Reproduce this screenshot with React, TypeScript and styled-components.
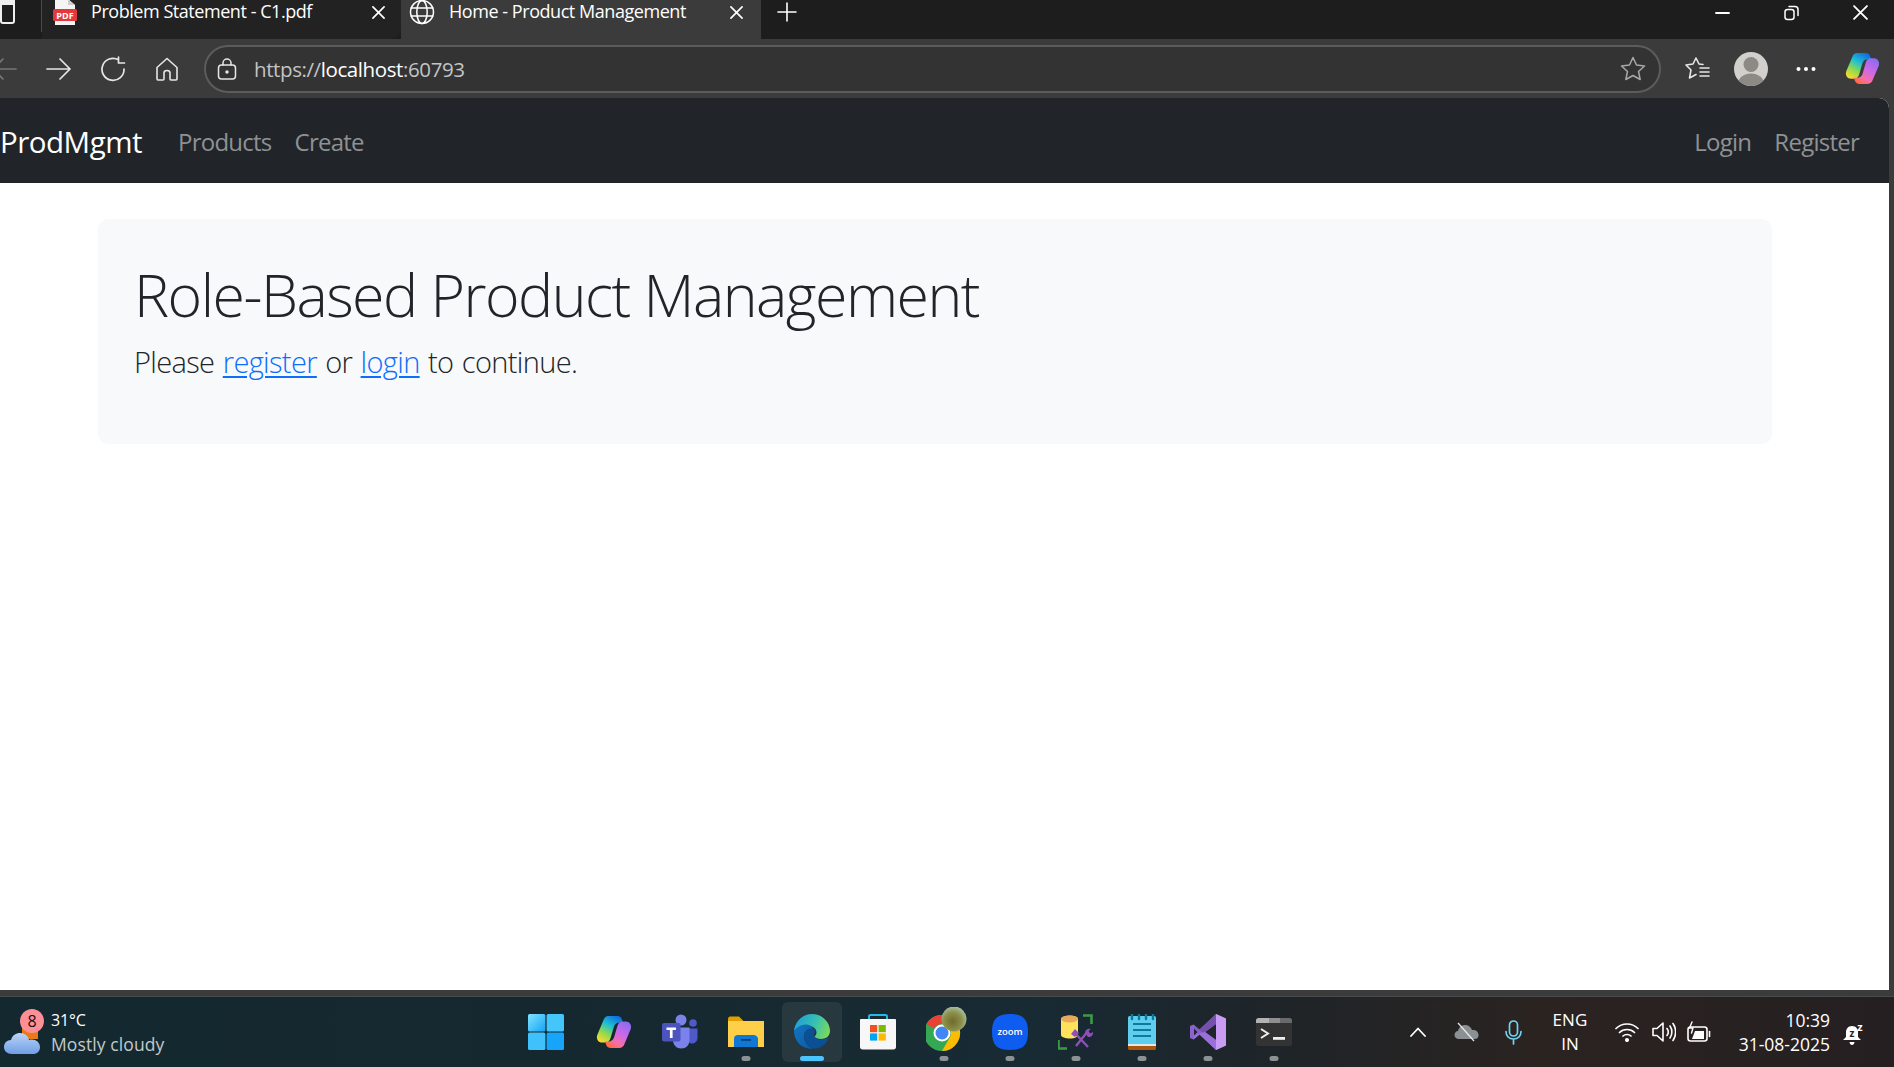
import React from 'react';
import styled, { createGlobalStyle } from 'styled-components';

const uiFont = '"Open Sans", "Noto Sans", "Liberation Sans", sans-serif';

const GlobalStyle = createGlobalStyle`
  html, body {
    margin: 0;
    padding: 0;
    background: #3b3b3b;
  }
  #root {
    width: 1894px;
    height: 1067px;
  }
`;

const Screen = styled.div`
  width: 1894px;
  height: 1067px;
  overflow: hidden;
  display: flex;
  flex-direction: column;
  font-family: ${uiFont};
`;

// browser chrome: tabs
const TabStrip = styled.div`
  height: 39px;
  flex: none;
  display: flex;
  align-items: stretch;
  background: #1d1d1d;
  color: #fff;
`;

const WorkspaceBox = styled.div`
  width: 41px;
  flex: none;
  border-right: 1px solid #4a4a4a;
  margin-bottom: 7px;
`;

const WorkspaceGlyph = styled.div`
  width: 15px;
  height: 24px;
  margin-top: 0;
  border: 2px solid #eee;
  border-top-width: 5px;
  border-radius: 0 0 3px 3px;
  box-sizing: border-box;
`;

const Tab = styled.div<{ $active?: boolean; $width: number; $inset: number; $end: number }>`
  width: ${(p) => p.$width}px;
  flex: none;
  display: flex;
  align-items: center;
  padding: 0 ${(p) => p.$end}px 15px ${(p) => p.$inset}px;
  box-sizing: border-box;
  background: ${(p) => (p.$active ? '#3b3b3b' : '#222222')};
  border-radius: ${(p) => (p.$active ? '0' : '0 0 10px 0')};
`;

const TabTitle = styled.span<{ $gap: number }>`
  margin-left: ${(p) => p.$gap}px;
  margin-top: -2px;
  flex: 1;
  font-size: 18px;
  letter-spacing: -0.45px;
  line-height: 24px;
  white-space: nowrap;
`;

const NewTab = styled.div`
  width: 52px;
  flex: none;
  display: flex;
  justify-content: center;
  padding-bottom: 15px;
  align-items: center;
  background: #1d1d1d;
  border-radius: 0 0 0 10px;
`;

const WindowControls = styled.div`
  margin-left: auto;
  display: flex;
  align-items: flex-start;
  padding: 5px 26px 0 0;
  gap: 54px;
`;

// browser chrome: address row
const Toolbar = styled.div`
  height: 59px;
  flex: none;
  display: flex;
  align-items: center;
  background: #3b3b3b;
  color: #e6e6e6;
`;

const NavButton = styled.div<{ $left: number }>`
  margin-left: ${(p) => p.$left}px;
  display: flex;
  flex: none;
`;

const AddressBar = styled.div`
  margin-left: 25px;
  width: 1457px;
  height: 48px;
  flex: none;
  box-sizing: border-box;
  border: 2px solid #5c5c5c;
  border-radius: 24px;
  background: #333333;
  display: flex;
  align-items: center;
  padding: 0 13px 0 11px;
`;

const Url = styled.span`
  margin-left: 17px;
  font-size: 20.5px;
  letter-spacing: -0.4px;
  color: #c4c4c4;
  flex: 1;
  b {
    font-weight: 400;
    color: #fff;
  }
`;

const Avatar = styled.div`
  margin-left: 23px;
  width: 34px;
  height: 34px;
  border-radius: 50%;
  overflow: hidden;
  flex: none;
  display: flex;
`;

// web page
const PageFrame = styled.div`
  flex: 1;
  min-height: 0;
  display: flex;
  background: #3b3b3b;
  padding: 0 5px 6px 0;
  border-bottom: 1px solid #484c4e;
  background-clip: padding-box;
`;

const Page = styled.div`
  flex: 1;
  min-width: 0;
  background: #fff;
  border-top-right-radius: 10px;
  overflow: hidden;
  display: flex;
  flex-direction: column;
`;

const Navbar = styled.nav`
  height: 85px;
  flex: none;
  display: flex;
  align-items: center;
  background: #212529;
  padding: 2px 30px 0 0;
  box-sizing: border-box;
`;

const Brand = styled.a`
  font-size: 29.5px;
  letter-spacing: -0.5px;
  color: #fff;
  margin-right: 36px;
`;

const NavLink = styled.a<{ $push?: boolean }>`
  font-size: 24px;
  letter-spacing: -0.75px;
  color: #8f9194;
  margin-right: 23px;
  margin-left: ${(p) => (p.$push ? 'auto' : '0')};
  &:last-child {
    margin-right: 0;
  }
`;

const Main = styled.main`
  padding: 36px 117px 0 98px;
`;

const Jumbotron = styled.section`
  background: #f8f9fa;
  border-radius: 10px;
  height: 225px;
  box-sizing: border-box;
  padding: 36px;
  color: #212529;
`;

const Heading = styled.h1`
  margin: 3px 0 0;
  font-size: 59px;
  font-weight: 300;
  letter-spacing: -1.5px;
  line-height: 72px;
`;

const Lead = styled.p`
  margin: 12px 0 0;
  font-size: 29px;
  font-weight: 300;
  letter-spacing: -0.65px;
  word-spacing: 1.5px;
  line-height: 40px;
  a {
    color: #0d6efd;
    text-decoration: underline;
    text-decoration-thickness: 2px;
    text-underline-offset: 3px;
  }
`;

// windows taskbar
const Taskbar = styled.div`
  height: 70px;
  flex: none;
  display: flex;
  align-items: center;
  color: #fff;
  background: linear-gradient(90deg, #142830 0%, #16282f 30%, #182a33 55%, #1f2428 68%, #2b2320 82%, #251f22 100%);
`;

const Weather = styled.div`
  width: 515px;
  flex: none;
  display: flex;
  align-items: center;
  height: 100%;
  box-sizing: border-box;
  padding-left: 4px;
`;

const WeatherIcon = styled.div`
  position: relative;
  width: 47px;
  height: 46px;
  flex: none;
  display: flex;
  align-items: flex-end;
`;

const Badge = styled.span`
  position: absolute;
  left: 16px;
  top: 0;
  width: 24px;
  height: 24px;
  border-radius: 50%;
  background: #ff8f96;
  color: #111;
  font-size: 16px;
  line-height: 24px;
  text-align: center;
`;

const WeatherText = styled.div`
  display: flex;
  flex-direction: column;
  font-size: 16px;
  line-height: 24px;
  letter-spacing: -0.1px;
`;

const WeatherNote = styled.span`
  color: #c3c9cb;
  font-size: 17.5px;
  letter-spacing: 0.1px;
`;

const TaskIcons = styled.div`
  display: flex;
  height: 100%;
`;

const TaskSlot = styled.div<{ $active?: boolean; $open?: boolean }>`
  position: relative;
  width: 66px;
  height: 100%;
  box-sizing: border-box;
  display: flex;
  align-items: center;
  justify-content: center;
  &::before {
    content: '';
    display: ${(p) => (p.$active ? 'block' : 'none')};
    position: absolute;
    left: 3px;
    right: 3px;
    top: 5px;
    bottom: 5px;
    border-radius: 6px;
    background: rgba(255, 255, 255, 0.07);
  }
  &::after {
    content: '';
    display: ${(p) => (p.$active || p.$open ? 'block' : 'none')};
    position: absolute;
    bottom: 6px;
    left: 50%;
    transform: translateX(-50%);
    width: ${(p) => (p.$active ? 24 : 9)}px;
    height: 5px;
    border-radius: 3px;
    background: ${(p) => (p.$active ? '#4cc2ff' : '#8c9193')};
  }
  svg {
    position: relative;
    z-index: 1;
  }
`;

const StartSlot = styled(TaskSlot)`
  padding-right: 4px;
`;

const Tray = styled.div`
  flex: 1;
  display: flex;
  align-items: center;
  height: 100%;
`;

const TrayItem = styled.div<{ $left: number }>`
  margin-left: ${(p) => p.$left}px;
  display: flex;
  flex: none;
`;

const Lang = styled.div`
  margin-left: 26px;
  width: 44px;
  text-align: center;
  font-size: 17px;
  line-height: 24px;
  letter-spacing: 0.1px;
`;

const Clock = styled.div`
  margin-left: 0;
  width: 119px;
  text-align: right;
  font-size: 17.5px;
  line-height: 24px;
`;

const IconStroke = { fill: 'none', stroke: 'currentColor', strokeLinecap: 'round', strokeLinejoin: 'round' } as const;

const CopilotIcon = ({ size, tag }: { size: number; tag: string }) => (
  <svg width={size} height={size} viewBox="0 0 34 34">
    <defs>
      <linearGradient id={`${tag}L`} x1="0.75" y1="0" x2="0.2" y2="1">
        <stop offset="0" stopColor="#0f6fe0" />
        <stop offset="0.38" stopColor="#1fc0d0" />
        <stop offset="0.68" stopColor="#8fd94f" />
        <stop offset="1" stopColor="#fbd92f" />
      </linearGradient>
      <linearGradient id={`${tag}R`} x1="0.8" y1="0" x2="0.2" y2="1">
        <stop offset="0" stopColor="#8a6cf0" />
        <stop offset="0.45" stopColor="#cf68e6" />
        <stop offset="0.75" stopColor="#f56fa8" />
        <stop offset="1" stopColor="#ff6a3a" />
      </linearGradient>
    </defs>
    <path d="M12 2h8c2.200 0 3.700 1 4.400 3l1 3h-3c-3 0-4.700 1.500-5.500 4l-3.200 11c-.8 2.700-2.600 4-5 4H6c-3.700 0-6-3.200-4.900-7L7 6c.8-2.500 2.500-4 5-4z" fill={`url(#${tag}L)`} />
    <path d="M22 32h-8c-2.200 0-3.700-1-4.400-3l-1-3h3c3 0 4.700-1.500 5.500-4l3.200-11c.8-2.700 2.600-4 5-4h2.700c3.700 0 6 3.200 4.900 7L27 28c-.8 2.500-2.500 4-5 4z" fill={`url(#${tag}R)`} />
  </svg>
);

const PdfIcon = () => (
  <svg width="24" height="26" viewBox="0 0 24 26">
    <path d="M2 0h13l7 6v20H2z" fill="#f5f5f5" />
    <path d="M15 0v6h7z" fill="#cfcfcf" />
    <rect x="0" y="10" width="24" height="12" rx="1.500" fill="#e5383b" />
    <text x="12" y="19.500" textAnchor="middle" fontSize="9" fontWeight="700" fill="#fff" fontFamily={uiFont}>PDF</text>
  </svg>
);

const GlobeIcon = () => (
  <svg width="26" height="26" viewBox="0 0 26 26" {...IconStroke} strokeWidth="1.500">
    <circle cx="13" cy="13" r="11.500" />
    <ellipse cx="13" cy="13" rx="5.200" ry="11.500" />
    <path d="M2.200 9h21.600M2.200 17h21.600" />
  </svg>
);

const CloseGlyph = ({ size = 13, weight = 1.8 }: { size?: number; weight?: number }) => (
  <svg width={size} height={size} viewBox="0 0 14 14" {...IconStroke} strokeWidth={weight}>
    <path d="M1 1l12 12M13 1L1 13" />
  </svg>
);

const StartIcon = () => (
  <svg width="36" height="36" viewBox="0 0 36 36">
    <defs>
      <linearGradient id="startA" x1="0" y1="0" x2="1" y2="1">
        <stop offset="0" stopColor="#7fe3ff" />
        <stop offset="1" stopColor="#16a4f5" />
      </linearGradient>
    </defs>
    <rect x="0" y="0" width="17.400" height="17.400" rx="1.500" fill="url(#startA)" />
    <rect x="18.600" y="0" width="17.400" height="17.400" rx="1.500" fill="#45c6fb" />
    <rect x="0" y="18.600" width="17.400" height="17.400" rx="1.500" fill="#3fc2fb" />
    <rect x="18.600" y="18.600" width="17.400" height="17.400" rx="1.500" fill="#16a5fb" />
  </svg>
);

const TeamsIcon = () => (
  <svg width="36" height="36" viewBox="0 0 36 36">
    <circle cx="31" cy="9" r="3.800" fill="#5059c9" />
    <path d="M25 14.500h10.500v9c0 3.500-2.300 6-5.300 6s-5.200-2.500-5.200-6z" fill="#5059c9" />
    <circle cx="19" cy="6" r="5.500" fill="#7b83eb" />
    <path d="M11 13.500h16.500v12.500c0 5-3.600 8.500-8.200 8.500S11 31 11 26z" fill="#7b83eb" />
    <rect x="0" y="9" width="18.500" height="18.500" rx="2" fill="#4b53bc" />
    <path d="M4.500 13.500h9.500v2.400h-3.400v8h-2.700v-8H4.500z" fill="#fff" />
  </svg>
);

const FolderIcon = () => (
  <svg width="36" height="36" viewBox="0 0 36 36">
    <path d="M0 5c0-1.500 1-2.500 2.500-2.500h8.500l4.500 4.500H36v5H0z" fill="#dfa000" />
    <path d="M0 7h36v26H0z" fill="#ffcf4a" />
    <path d="M6 33v-8c0-2.500 1.500-4 4-4h15c2.500 0 5 1.500 5 4v8z" fill="#0f78d4" />
    <rect x="13" y="25" width="10" height="1.800" fill="#0a3f75" />
  </svg>
);

const EdgeIcon = () => (
  <svg width="36" height="36" viewBox="0 0 36 36">
    <defs>
      <linearGradient id="edgeTop" x1="0" y1="0.3" x2="1" y2="0.6">
        <stop offset="0" stopColor="#1f9ed8" />
        <stop offset="0.55" stopColor="#35c1b2" />
        <stop offset="1" stopColor="#7ad95c" />
      </linearGradient>
      <linearGradient id="edgeBody" x1="0" y1="0" x2="1" y2="1">
        <stop offset="0" stopColor="#1276c4" />
        <stop offset="1" stopColor="#0c59a4" />
      </linearGradient>
    </defs>
    <path d="M0 17C1 7 9 0 18 0c10 0 18 8 18 17 0 5-4 8-9 8-3 0-6-1-6.500-2.500 1-1 2-2 2-4 0-4-4-7-9-7-6 0-11 3-13.500 5.500z" fill="url(#edgeTop)" />
    <path d="M0 17c2-3 6-6 11.500-6.500C16 10.500 19 13 19 15c-4-1-9 1.500-9 7.500 0 5 3.500 10 9 12-10.500 1.500-19-7-19-17.500z" fill="url(#edgeBody)" />
    <path d="M19 15c2 .5 2.500 2 1.500 3.500-1 1.500-1 3.500.5 5 2 2 6 2.500 9.500 1.500 2-.6 3.500-1.500 4.500-2.500-1 4.500-3.500 8-8 10.500-3 1.500-5.500 1.700-8 1.300-5.500-2-9-7-9-12 0-6 5-8.500 9-7.300z" fill="#0b4f94" />
  </svg>
);

const StoreIcon = () => (
  <svg width="36" height="36" viewBox="0 0 36 36">
    <path d="M9 7V2.500c0-1 .5-1.500 1.500-1.500h15c1 0 1.500.5 1.500 1.500V7" fill="none" stroke="#29b6e8" strokeWidth="2" />
    <path d="M1 5h34c.5 0 1 .5 1 1v27c0 1.500-1 2.500-2.500 2.500h-31C1 35.500 0 34.500 0 33V6c0-.5.500-1 1-1z" fill="#f7f7f7" />
    <rect x="10" y="11" width="7.200" height="7.200" fill="#f25022" />
    <rect x="18.600" y="11" width="7.200" height="7.200" fill="#7fba00" />
    <rect x="10" y="19.400" width="7.200" height="7.200" fill="#00a4ef" />
    <rect x="18.600" y="19.400" width="7.200" height="7.200" fill="#ffb900" />
  </svg>
);

const ChromeIcon = () => (
  <svg width="44" height="44" viewBox="0 0 44 44" style={{ marginTop: -6, marginLeft: 8 }}>
    <defs>
      <radialGradient id="chromeAvatar" cx="0.45" cy="0.6" r="0.6">
        <stop offset="0" stopColor="#6f6a2e" />
        <stop offset="0.6" stopColor="#8c9048" />
        <stop offset="1" stopColor="#a9bfa2" />
      </radialGradient>
    </defs>
    <circle cx="16" cy="26" r="18" fill="#34a853" />
    <path d="M16 8a18 18 0 0 1 15.600 9H16a9 9 0 0 0-7.800 4.500L.4 17A18 18 0 0 1 16 8z" fill="#ea4335" />
    <path d="M31.600 17A18 18 0 0 1 16 44l7.800-13.500A9 9 0 0 0 25 26a9 9 0 0 0-1.200-4.500z" fill="#fbbc05" />
    <circle cx="16" cy="26" r="8.500" fill="#fff" />
    <circle cx="16" cy="26" r="6.500" fill="#4285f4" />
    <circle cx="28" cy="12" r="12.500" fill="url(#chromeAvatar)" />
  </svg>
);

const ZoomIcon = () => (
  <svg width="36" height="36" viewBox="0 0 36 36">
    <path d="M18 0c13 0 18 5 18 18s-5 18-18 18S0 31 0 18 5 0 18 0z" fill="#0e5cf0" />
    <text x="18" y="20.500" textAnchor="middle" fontSize="9.500" fontWeight="600" fill="#fff" fontFamily={uiFont}>zoom</text>
  </svg>
);

const DbToolIcon = () => (
  <svg width="36" height="36" viewBox="0 0 36 36">
    <path d="M3 5c0-2 4-3.500 9-3.500S20 3 20 5v16c0 2-3.500 3.500-8 3.500S3 23 3 21z" fill="#ffe15c" />
    <ellipse cx="11.500" cy="5" rx="8.500" ry="3.500" fill="#eaa95a" />
    <path d="M25 1.500h8.500v8.500M9 34.500H.5V26" fill="none" stroke="#3c9a45" strokeWidth="2.600" />
    <path d="M16 18l14 15M30 17L18 32" stroke="#8d4fb8" strokeWidth="2.400" fill="none" />
    <path d="M13 20l4-5 4 4-4 4zM27 19c0-3 3-5 5.500-4l-2 2.500 2 2 2.500-1.500c.5 3-2 5.500-5 5z" fill="#8d4fb8" />
  </svg>
);

const NotepadIcon = () => (
  <svg width="30" height="36" viewBox="0 0 30 36">
    <rect x="1" y="2" width="28" height="30" rx="1.500" fill="#5fcdee" />
    <path d="M1 30h28v2H1z" fill="#dfe8ea" />
    <path d="M1 32h28v2.500c0 .8-.5 1.500-1.500 1.500h-25C1.500 36 1 35.300 1 34.500z" fill="#a9560f" />
    <path d="M5 0v5M12 0v5M19 0v5M26 0v5" stroke="#0c7b9a" strokeWidth="2.400" strokeLinecap="round" />
    <path d="M6 10h18M6 16h18M6 22h18" stroke="#0c7b9a" strokeWidth="2" />
  </svg>
);

const VsIcon = () => (
  <svg width="36" height="36" viewBox="0 0 36 36">
    <path fillRule="evenodd" d="M26 0L9.500 15.500 3.500 10.500 0 12v12l3.500 1.500 6-5L26 36l10-4.500v-27zM26 10v16l-11-8zM4 14.500v7L7.500 18z" fill="#8c62cc" />
    <path d="M26 0l10 4.500v27L26 36V26l0-16z" fill="#c79cf2" />
    <path d="M26 0L9.500 15.500 3.500 10.500 7 15l7 4 12-9z" fill="#7650ad" />
    <path d="M3.500 25.500l6-5L26 36V26L15 18l-11 3.500z" fill="#9a6fd8" />
  </svg>
);

const TerminalIcon = () => (
  <svg width="36" height="28" viewBox="0 0 36 28">
    <rect x="0" y="0" width="36" height="28" rx="2.500" fill="#333" />
    <path d="M2.500 0H13v5H0V2.500C0 1 1 0 2.500 0z" fill="#b3b3b3" />
    <rect x="13" y="0" width="11" height="5" fill="#8f8f8f" />
    <path d="M24 0h9.500C35 0 36 1 36 2.500V5H24z" fill="#6a6a6a" />
    <path d="M5 11l7 4.500L5 20" fill="none" stroke="#eee" strokeWidth="2" />
    <rect x="17" y="19" width="12" height="2.800" fill="#eee" />
  </svg>
);

const App = () => (
  <Screen>
    <GlobalStyle />
    <TabStrip>
      <WorkspaceBox>
        <WorkspaceGlyph />
      </WorkspaceBox>
      <Tab $width={359} $inset={11} $end={16}>
        <PdfIcon />
        <TabTitle $gap={14}>Problem Statement - C1.pdf</TabTitle>
        <CloseGlyph />
      </Tab>
      <Tab $active $width={360} $inset={8} $end={18}>
        <GlobeIcon />
        <TabTitle $gap={14}>Home - Product Management</TabTitle>
        <CloseGlyph />
      </Tab>
      <NewTab>
        <svg width="20" height="20" viewBox="0 0 20 20" {...IconStroke} strokeWidth="1.600">
          <path d="M10 1v18M1 10h18" />
        </svg>
      </NewTab>
      <WindowControls>
        <svg width="15" height="16" viewBox="0 0 15 16" {...IconStroke} strokeWidth="1.800">
          <path d="M1 8h13" />
        </svg>
        <svg width="15" height="16" viewBox="0 0 15 16" {...IconStroke} strokeWidth="1.500">
          <rect x="1" y="4.500" width="9" height="10" rx="2.500" />
          <path d="M5 1.500h6c1.700 0 3 1.300 3 3v6" />
        </svg>
        <CloseGlyph size={15} weight={1.700} />
      </WindowControls>
    </TabStrip>

    <Toolbar>
      <NavButton $left={-9}>
        <svg width="26" height="26" viewBox="0 0 26 26" {...IconStroke} strokeWidth="1.700" color="#777">
          <path d="M25 13H2M12 3L2 13l10 10" />
        </svg>
      </NavButton>
      <NavButton $left={29}>
        <svg width="26" height="26" viewBox="0 0 26 26" {...IconStroke} strokeWidth="1.700">
          <path d="M1 13h23M14 3l10 10-10 10" />
        </svg>
      </NavButton>
      <NavButton $left={28}>
        <svg width="26" height="26" viewBox="0 0 26 26" {...IconStroke} strokeWidth="1.700">
          <path d="M18.500 3.800A11 11 0 1 0 24 13M18.500 1v6h6" />
        </svg>
      </NavButton>
      <NavButton $left={29}>
        <svg width="24" height="24" viewBox="0 0 24 24" {...IconStroke} strokeWidth="1.600">
          <path d="M12 1.500L2 10.500V22c0 .5.300 1 1 1h5c.7 0 1-.5 1-1v-6c0-1.500 1-2.500 3-2.500s3 1 3 2.500v6c0 .5.300 1 1 1h5c.7 0 1-.5 1-1V10.500z" />
        </svg>
      </NavButton>
      <AddressBar>
        <svg width="20" height="22" viewBox="0 0 20 22" {...IconStroke} strokeWidth="1.500">
          <rect x="1.500" y="7" width="17" height="14" rx="3" />
          <path d="M6 7V5a4 4 0 0 1 8 0v2" />
          <circle cx="10" cy="14" r="1" fill="currentColor" />
        </svg>
        <Url>
          https://<b>localhost</b>:60793
        </Url>
        <svg width="26" height="25" viewBox="0 0 26 25" {...IconStroke} strokeWidth="1.500" color="#a8a8a8">
          <path d="M13 1.500l3.500 7.500 8 1-6 5.500 1.700 8L13 19.500 5.800 23.500l1.700-8-6-5.500 8-1z" />
        </svg>
      </AddressBar>
      <NavButton $left={24}>
        <svg width="26" height="26" viewBox="0 0 26 26" {...IconStroke} strokeWidth="1.600">
          <path d="M18 8.500L14 8l-3-6-3 6-7 1 5 5-1.500 8 6.500-3.500" />
          <path d="M15 12h9M15 16h9M15 20h9" />
        </svg>
      </NavButton>
      <Avatar>
        <svg width="34" height="34" viewBox="0 0 34 34">
          <rect width="34" height="34" fill="#d1d0cc" />
          <circle cx="17" cy="12.500" r="7.500" fill="#8d8a86" />
          <ellipse cx="17" cy="32" rx="13" ry="10.500" fill="#8d8a86" />
        </svg>
      </Avatar>
      <NavButton $left={28}>
        <svg width="20" height="6" viewBox="0 0 20 6" fill="#fff">
          <circle cx="2.500" cy="3" r="2" />
          <circle cx="10" cy="3" r="2" />
          <circle cx="17.500" cy="3" r="2" />
        </svg>
      </NavButton>
      <NavButton $left={29}>
        <CopilotIcon size={35} tag="bar" />
      </NavButton>
    </Toolbar>

    <PageFrame>
      <Page>
        <Navbar>
          <Brand>ProdMgmt</Brand>
          <NavLink>Products</NavLink>
          <NavLink>Create</NavLink>
          <NavLink $push>Login</NavLink>
          <NavLink>Register</NavLink>
        </Navbar>
        <Main>
          <Jumbotron>
            <Heading>Role-Based Product Management</Heading>
            <Lead>
              Please <a href="#register">register</a> or <a href="#login">login</a> to continue.
            </Lead>
          </Jumbotron>
        </Main>
      </Page>
    </PageFrame>

    <Taskbar>
      <Weather>
        <WeatherIcon>
          <svg width="38" height="30" viewBox="0 0 38 30">
            <defs>
              <linearGradient id="cloud" x1="0" y1="0" x2="0" y2="1">
                <stop offset="0" stopColor="#bcd3f7" />
                <stop offset="1" stopColor="#6f9fe6" />
              </linearGradient>
            </defs>
            <rect x="18" y="0" width="16" height="14" fill="#e87a17" />
            <path d="M8 29C3 29 0 26 0 22s3-7 7-7c1.500-5 5-7 9-7 5 0 8 3 9 7 1-.5 2-.5 3-.5 4 0 8 3 8 7.500S33 29 29 29z" fill="url(#cloud)" />
          </svg>
          <Badge>8</Badge>
        </WeatherIcon>
        <WeatherText>
          <span>31°C</span>
          <WeatherNote>Mostly cloudy</WeatherNote>
        </WeatherText>
      </Weather>
      <TaskIcons>
        <StartSlot><StartIcon /></StartSlot>
        <TaskSlot><CopilotIcon size={36} tag="task" /></TaskSlot>
        <TaskSlot><TeamsIcon /></TaskSlot>
        <TaskSlot $open><FolderIcon /></TaskSlot>
        <TaskSlot $active><EdgeIcon /></TaskSlot>
        <TaskSlot><StoreIcon /></TaskSlot>
        <TaskSlot $open><ChromeIcon /></TaskSlot>
        <TaskSlot $open><ZoomIcon /></TaskSlot>
        <TaskSlot $open><DbToolIcon /></TaskSlot>
        <TaskSlot $open><NotepadIcon /></TaskSlot>
        <TaskSlot $open><VsIcon /></TaskSlot>
        <TaskSlot $open><TerminalIcon /></TaskSlot>
      </TaskIcons>
      <Tray>
        <TrayItem $left={103}>
          <svg width="16" height="10" viewBox="0 0 16 10" {...IconStroke} strokeWidth="1.800">
            <path d="M1 9l7-7.500L15 9" />
          </svg>
        </TrayItem>
        <TrayItem $left={28}>
          <svg width="25" height="20" viewBox="0 0 25 20">
            <path d="M5 17c-3 0-4.500-2-4.500-4s1.500-4 3.500-4c1-4 4-6 7-6 3.500 0 6 2 7 5 3.500-.5 6.500 1.500 6.500 5s-2 4-4 4z" fill="#8b9092" />
            <path d="M4 1l16 18" stroke="#e8e8e8" strokeWidth="1.300" />
          </svg>
        </TrayItem>
        <TrayItem $left={26}>
          <svg width="17" height="25" viewBox="0 0 17 25" fill="none" stroke="#6fd3f2" strokeWidth="1.700" strokeLinecap="round">
            <rect x="4.500" y="1" width="8" height="15" rx="4" />
            <path d="M1 11.500c0 4.500 3 7.500 7.500 7.500s7.500-3 7.500-7.500M8.500 19v5" />
          </svg>
        </TrayItem>
        <Lang>
          ENG
          <br />
          IN
        </Lang>
        <TrayItem $left={23}>
          <svg width="24" height="20" viewBox="0 0 24 20" {...IconStroke} strokeWidth="1.700">
            <path d="M1 6.500c6-6 16-6 22 0M4.500 10.500c4-4 11-4 15 0M8 14c2-2 6-2 8 0" />
            <circle cx="12" cy="18" r="1.200" fill="currentColor" />
          </svg>
        </TrayItem>
        <TrayItem $left={13}>
          <svg width="24" height="22" viewBox="0 0 24 22" {...IconStroke} strokeWidth="1.600">
            <path d="M1 7.500h4L11 2v18l-6-5.500H1zM15 7.500c1.500 2 1.500 5 0 7M18 5c2.500 3.500 2.500 8.500 0 12M21 2.500c3.500 5 3.500 12 0 17" />
          </svg>
        </TrayItem>
        <TrayItem $left={11}>
          <svg width="24" height="22" viewBox="0 0 24 22" {...IconStroke} strokeWidth="1.600">
            <rect x="1" y="6" width="19" height="14" rx="2.500" />
            <path d="M22.500 10.500v5" />
            <path d="M5 18l3-8h9v8z" fill="currentColor" stroke="none" />
            <path d="M5 1L2.500 7H6l-1.500 5" strokeWidth="1.400" />
          </svg>
        </TrayItem>
        <Clock>
          10:39
          <br />
          31-08-2025
        </Clock>
        <TrayItem $left={12}>
          <svg width="24" height="30" viewBox="0 0 24 30">
            <path d="M10 9c-4 0-6 3-6 6v5l-3 3h18l-3-3v-5c0-3-2-6-6-6z" fill="#fff" />
            <path d="M7.500 25h5c0 1.500-1 3-2.500 3s-2.500-1.500-2.500-3z" fill="#fff" />
            <text x="10" y="20" textAnchor="middle" fontSize="10" fontWeight="700" fill="#222" fontFamily={uiFont}>z</text>
            <text x="18" y="14" textAnchor="middle" fontSize="11" fontWeight="700" fill="#fff" fontFamily={uiFont}>z</text>
          </svg>
        </TrayItem>
      </Tray>
    </Taskbar>
  </Screen>
);

export default App;
